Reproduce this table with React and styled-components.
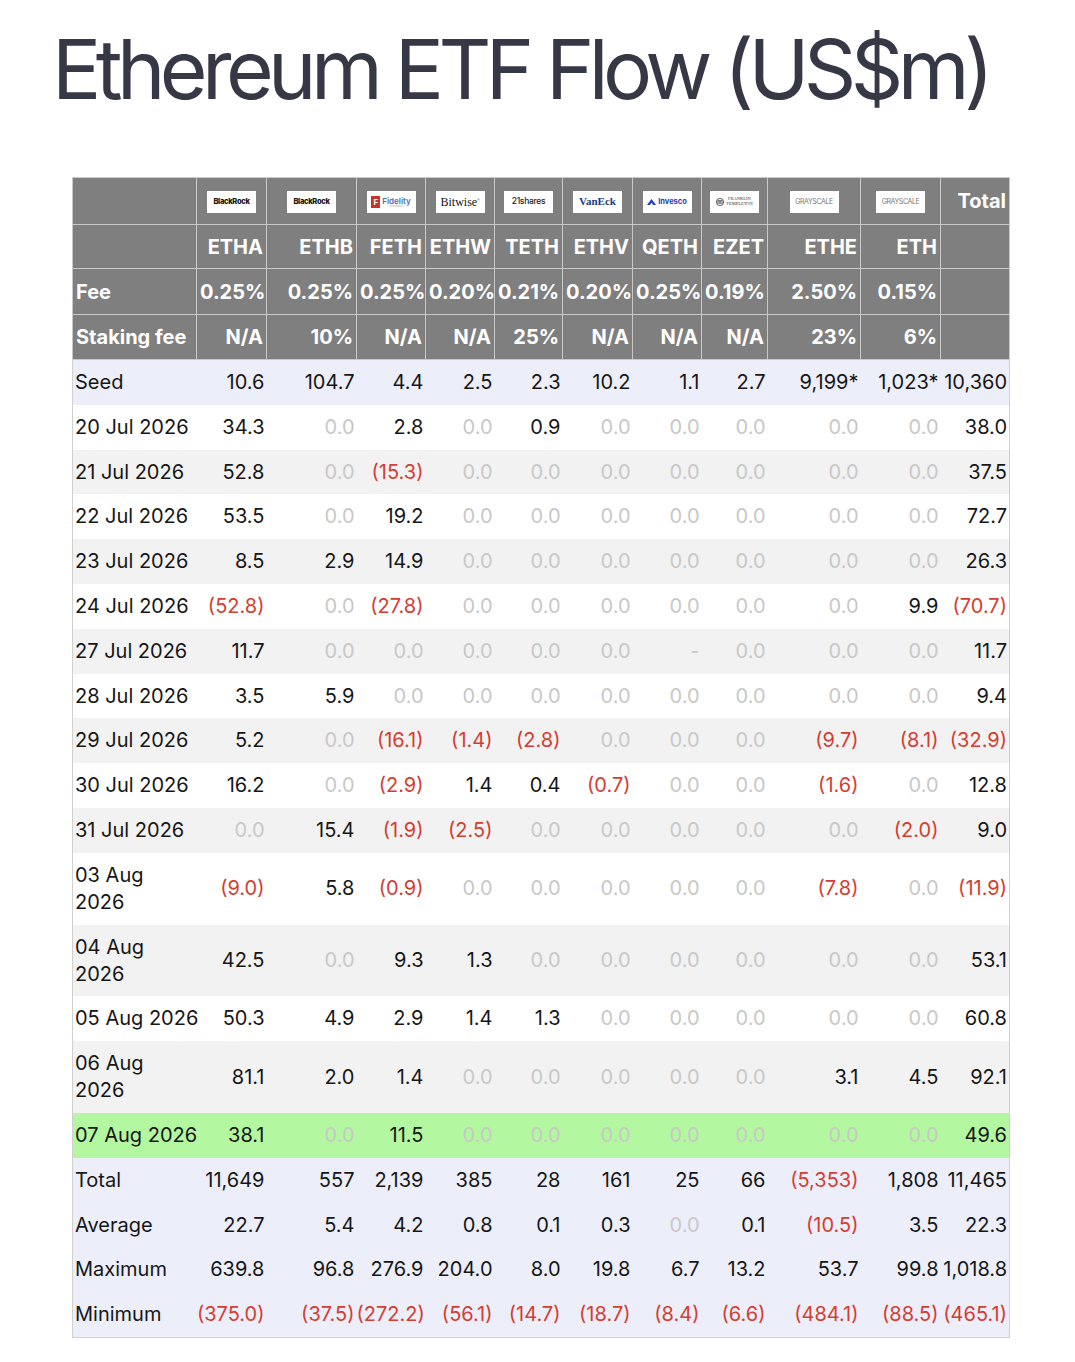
import React from 'react';
import styled, { createGlobalStyle } from 'styled-components';

const GlobalStyle = createGlobalStyle`
  body {
    margin: 0;
    background: #ffffff;
    font-family: Inter, "Noto Sans", "Liberation Sans", sans-serif;
  }
`;

const Page = styled.div`
  width: 1075px;
  padding: 29px 0 24px 0;
  box-sizing: border-box;
`;

const Title = styled.h1`
  margin: 0 0 66px 52px;
  font-size: 82px;
  line-height: 82px;
  font-weight: 400;
  letter-spacing: -5.6px;
  color: #373845;
  white-space: nowrap;
`;

const Table = styled.table`
  margin-left: 72px;
  width: 937px;
  table-layout: fixed;
  border-collapse: collapse;
  border: 1px solid #d0d0d0;
  font-size: 20px;
  color: #161616;
`;

const HeadRow = styled.tr`
  height: ${p => p.$h}px;
  background: #7f7f7f;
`;

const HeadCell = styled.th`
  border: 1px solid #c9c9c9;
  padding: 0 3px;
  color: #ffffff;
  font-weight: 700;
  text-align: ${p => (p.$left ? 'left' : p.$center ? 'center' : 'right')};
  vertical-align: middle;
  white-space: nowrap;
  overflow: hidden;
`;

const LogoBox = styled.div`
  width: 49px;
  height: 22px;
  margin: 1px auto 0;
  background: #ffffff;
  display: flex;
  align-items: center;
  justify-content: center;
  gap: 2px;
  overflow: hidden;
`;

const LogoText = styled.span`
  font-family: ${p => (p.$serif ? '"Liberation Serif", "DejaVu Serif", serif' : 'Inter, "Liberation Sans", sans-serif')};
  font-size: ${p => p.$size}px;
  font-weight: ${p => p.$weight || 400};
  color: ${p => p.$color || '#111'};
  letter-spacing: ${p => p.$ls || 0}px;
  line-height: 1;
  white-space: nowrap;
`;

const Stack = styled.span`
  display: flex;
  flex-direction: column;
  line-height: 1;
`;

const FidelityMark = styled.span`
  width: 9px;
  height: 12px;
  background: #c8342a;
  color: #fff;
  font-size: 8px;
  font-weight: 700;
  display: flex;
  align-items: center;
  justify-content: center;
`;

const Row = styled.tr`
  background: ${p => p.$bg};
`;

const LabelCell = styled.td`
  padding: 9px 2px 8.8px 2px;
  line-height: 27px;
  text-align: left;
  white-space: nowrap;
`;

const toneColor = { neg: '#d43d31', zero: '#c8c8c8', pos: '#161616' };

const NumCell = styled.td`
  padding: 9px 2px 8.8px 0;
  line-height: 27px;
  text-align: right;
  white-space: nowrap;
  color: ${p => toneColor[p.$tone]};
`;

const widths = [124, 70, 90, 69, 69, 68, 70, 69, 66, 93, 80, 69];

const tickers = ['ETHA', 'ETHB', 'FETH', 'ETHW', 'TETH', 'ETHV', 'QETH', 'EZET', 'ETHE', 'ETH'];
const fees = ['0.25%', '0.25%', '0.25%', '0.20%', '0.21%', '0.20%', '0.25%', '0.19%', '2.50%', '0.15%'];
const staking = ['N/A', '10%', 'N/A', 'N/A', '25%', 'N/A', 'N/A', 'N/A', '23%', '6%'];

const LAV = '#eceef9';
const GREY = '#f2f2f2';
const WHITE = '#ffffff';
const GREEN = '#b4f7a1';

const rows = [
  { label: ['Seed'], bg: LAV, v: ['10.6', '104.7', '4.4', '2.5', '2.3', '10.2', '1.1', '2.7', '9,199*', '1,023*', '10,360'] },
  { label: ['20 Jul 2026'], bg: WHITE, v: ['34.3', '0.0', '2.8', '0.0', '0.9', '0.0', '0.0', '0.0', '0.0', '0.0', '38.0'] },
  { label: ['21 Jul 2026'], bg: GREY, v: ['52.8', '0.0', '(15.3)', '0.0', '0.0', '0.0', '0.0', '0.0', '0.0', '0.0', '37.5'] },
  { label: ['22 Jul 2026'], bg: WHITE, v: ['53.5', '0.0', '19.2', '0.0', '0.0', '0.0', '0.0', '0.0', '0.0', '0.0', '72.7'] },
  { label: ['23 Jul 2026'], bg: GREY, v: ['8.5', '2.9', '14.9', '0.0', '0.0', '0.0', '0.0', '0.0', '0.0', '0.0', '26.3'] },
  { label: ['24 Jul 2026'], bg: WHITE, v: ['(52.8)', '0.0', '(27.8)', '0.0', '0.0', '0.0', '0.0', '0.0', '0.0', '9.9', '(70.7)'] },
  { label: ['27 Jul 2026'], bg: GREY, v: ['11.7', '0.0', '0.0', '0.0', '0.0', '0.0', '-', '0.0', '0.0', '0.0', '11.7'] },
  { label: ['28 Jul 2026'], bg: WHITE, v: ['3.5', '5.9', '0.0', '0.0', '0.0', '0.0', '0.0', '0.0', '0.0', '0.0', '9.4'] },
  { label: ['29 Jul 2026'], bg: GREY, v: ['5.2', '0.0', '(16.1)', '(1.4)', '(2.8)', '0.0', '0.0', '0.0', '(9.7)', '(8.1)', '(32.9)'] },
  { label: ['30 Jul 2026'], bg: WHITE, v: ['16.2', '0.0', '(2.9)', '1.4', '0.4', '(0.7)', '0.0', '0.0', '(1.6)', '0.0', '12.8'] },
  { label: ['31 Jul 2026'], bg: GREY, v: ['0.0', '15.4', '(1.9)', '(2.5)', '0.0', '0.0', '0.0', '0.0', '0.0', '(2.0)', '9.0'] },
  { label: ['03 Aug', '2026'], bg: WHITE, v: ['(9.0)', '5.8', '(0.9)', '0.0', '0.0', '0.0', '0.0', '0.0', '(7.8)', '0.0', '(11.9)'] },
  { label: ['04 Aug', '2026'], bg: GREY, v: ['42.5', '0.0', '9.3', '1.3', '0.0', '0.0', '0.0', '0.0', '0.0', '0.0', '53.1'] },
  { label: ['05 Aug 2026'], bg: WHITE, v: ['50.3', '4.9', '2.9', '1.4', '1.3', '0.0', '0.0', '0.0', '0.0', '0.0', '60.8'] },
  { label: ['06 Aug', '2026'], bg: GREY, v: ['81.1', '2.0', '1.4', '0.0', '0.0', '0.0', '0.0', '0.0', '3.1', '4.5', '92.1'] },
  { label: ['07 Aug 2026'], bg: GREEN, v: ['38.1', '0.0', '11.5', '0.0', '0.0', '0.0', '0.0', '0.0', '0.0', '0.0', '49.6'] },
  { label: ['Total'], bg: LAV, v: ['11,649', '557', '2,139', '385', '28', '161', '25', '66', '(5,353)', '1,808', '11,465'] },
  { label: ['Average'], bg: LAV, v: ['22.7', '5.4', '4.2', '0.8', '0.1', '0.3', '0.0', '0.1', '(10.5)', '3.5', '22.3'] },
  { label: ['Maximum'], bg: LAV, v: ['639.8', '96.8', '276.9', '204.0', '8.0', '19.8', '6.7', '13.2', '53.7', '99.8', '1,018.8'] },
  { label: ['Minimum'], bg: LAV, v: ['(375.0)', '(37.5)', '(272.2)', '(56.1)', '(14.7)', '(18.7)', '(8.4)', '(6.6)', '(484.1)', '(88.5)', '(465.1)'] },
];

function toneOf(value, isTotalCol) {
  if (value.startsWith('(')) return 'neg';
  if (!isTotalCol && (value === '0.0' || value === '-')) return 'zero';
  return 'pos';
}

function BlackRockLogo() {
  return <LogoText $size={7.5} $weight={800} $ls={-0.3}>BlackRock</LogoText>;
}

function FidelityLogo() {
  return (
    <>
      <FidelityMark>F</FidelityMark>
      <Stack>
        <LogoText $size={8} $weight={600} $color="#3f6fb5">Fidelity</LogoText>
        <LogoText $size={2} $color="#8aa">INVESTMENTS</LogoText>
      </Stack>
    </>
  );
}

function InvescoLogo() {
  return (
    <>
      <svg width="9" height="6" viewBox="0 0 9 6">
        <path d="M0 6 L4.5 0 L9 6 Z M3 6 L4.5 3.5 L6 6 Z" fill="#1d3cbd" fillRule="evenodd" />
      </svg>
      <LogoText $size={7.5} $weight={700} $color="#1d3cbd">Invesco</LogoText>
    </>
  );
}

function FranklinLogo() {
  return (
    <>
      <svg width="8" height="8" viewBox="0 0 8 8">
        <circle cx="4" cy="4" r="3.6" fill="none" stroke="#333" strokeWidth="0.8" />
        <path d="M2 6 V3 M3.3 6 V3 M4.7 6 V3 M6 6 V3 M1.5 2.6 H6.5" stroke="#333" strokeWidth="0.7" />
      </svg>
      <Stack>
        <LogoText $serif $size={4.5} $color="#333">FRANKLIN</LogoText>
        <LogoText $serif $size={4.5} $color="#333">TEMPLETON</LogoText>
      </Stack>
    </>
  );
}

const logos = [
  <BlackRockLogo />,
  <BlackRockLogo />,
  <FidelityLogo />,
  <LogoText $serif $size={12} $color="#111">Bitwise<sup style={{ fontSize: 3 }}>®</sup></LogoText>,
  <LogoText $size={8.5} $weight={500} $color="#222" $ls={-0.3}>21shares</LogoText>,
  <LogoText $serif $size={11} $weight={700} $color="#1c3a7a">VanEck</LogoText>,
  <InvescoLogo />,
  <FranklinLogo />,
  <LogoText $size={7} $color="#777" $ls={-0.4}>GRAYSCALE</LogoText>,
  <LogoText $size={7} $color="#777" $ls={-0.4}>GRAYSCALE</LogoText>,
];

export default function App() {
  return (
    <Page>
      <GlobalStyle />
      <Title>Ethereum ETF Flow (US$m)</Title>
      <Table>
        <colgroup>
          {widths.map((w, i) => <col key={i} style={{ width: w }} />)}
        </colgroup>
        <thead>
          <HeadRow $h={47}>
            <HeadCell />
            {logos.map((logo, i) => (
              <HeadCell key={i} $center>
                <LogoBox>{logo}</LogoBox>
              </HeadCell>
            ))}
            <HeadCell>Total</HeadCell>
          </HeadRow>
          <HeadRow $h={44}>
            <HeadCell />
            {tickers.map(t => <HeadCell key={t}>{t}</HeadCell>)}
            <HeadCell />
          </HeadRow>
          <HeadRow $h={46}>
            <HeadCell $left>Fee</HeadCell>
            {fees.map((f, i) => <HeadCell key={i}>{f}</HeadCell>)}
            <HeadCell />
          </HeadRow>
          <HeadRow $h={45}>
            <HeadCell $left>Staking fee</HeadCell>
            {staking.map((s, i) => <HeadCell key={i}>{s}</HeadCell>)}
            <HeadCell />
          </HeadRow>
        </thead>
        <tbody>
          {rows.map(r => (
            <Row key={r.label.join(' ')} $bg={r.bg}>
              <LabelCell>
                {r.label.map((part, i) => (
                  <React.Fragment key={i}>
                    {i > 0 && <br />}
                    {part}
                  </React.Fragment>
                ))}
              </LabelCell>
              {r.v.map((val, i) => (
                <NumCell key={i} $tone={toneOf(val, i === r.v.length - 1)}>{val}</NumCell>
              ))}
            </Row>
          ))}
        </tbody>
      </Table>
    </Page>
  );
}
